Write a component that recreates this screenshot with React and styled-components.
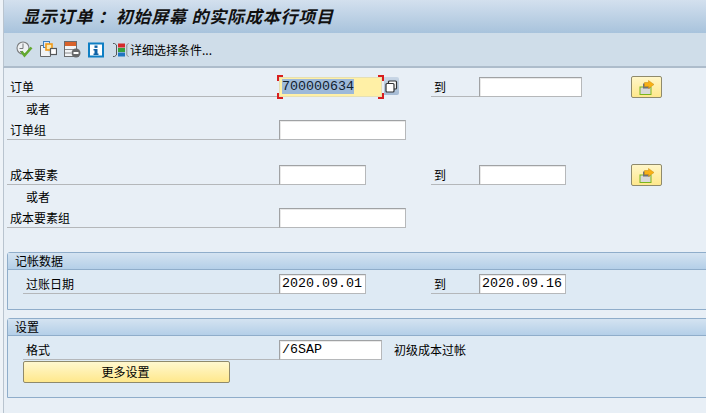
import React from "react";
import styled, { createGlobalStyle } from "styled-components";

const GlobalStyle = createGlobalStyle`
  html, body {
    margin: 0;
    padding: 0;
    background: #e8eff6;
  }
  body {
    font-family: "Noto Sans CJK SC", "Liberation Sans", sans-serif;
    font-size: 12px;
    color: #000;
  }
`;

const ClockCheckIcon = () => (
  <svg width="17" height="17" viewBox="0 0 17 17">
    <circle cx="7" cy="7" r="6" fill="#eef1f3" stroke="#7d7f81" strokeWidth="1.1" />
    <path d="M7 2.5V7.5H3.5M4 10.5H7" fill="none" stroke="#77797b" />
    <path d="M5.5 10.5L8.5 14.5L15.5 6.5" fill="none" stroke="#62a92f" strokeWidth="2.6" />
  </svg>
);

const CopyLayersIcon = () => (
  <svg width="17" height="17" viewBox="0 0 17 17">
    <path d="M3.5 4.5H0.5V15.5H10.5V13.5" fill="#f2f4f6" stroke="#66686a" />
    <rect x="3.5" y="0.5" width="6" height="6" fill="#dfe8f2" stroke="#3f7fbf" />
    <rect x="6" y="3" width="6" height="6" fill="#ffeab0" stroke="#f09a1a" strokeWidth="1.6" />
    <rect x="10.5" y="7.5" width="6" height="6" fill="#fff" stroke="#55585a" strokeWidth="1.2" />
  </svg>
);

const RemoveRowIcon = () => (
  <svg width="17" height="17" viewBox="0 0 17 17">
    <rect x="0.5" y="0.5" width="12" height="15" fill="#f3f5f7" stroke="#6a6c6e" />
    <rect x="1" y="1" width="11" height="4" fill="#d9622b" />
    <path d="M1 8.5H12M1 12H7" stroke="#8c8e90" />
    <circle cx="12" cy="12" r="4.5" fill="#66686a" />
    <rect x="9.5" y="11" width="5" height="2" fill="#fff" />
  </svg>
);

const InfoIcon = () => (
  <svg width="16" height="16" viewBox="0 0 16 16">
    <rect x="1" y="1.5" width="14" height="13" fill="#fff" stroke="#0f7fc4" strokeWidth="2" />
    <rect x="6.5" y="3.5" width="3" height="2.4" fill="#0f62a5" />
    <path d="M5.5 7H9.5V11.5H10.5V13H5.5V11.5H6.5V8.5H5.5Z" fill="#0f62a5" />
  </svg>
);

const MultiSelectIcon = () => (
  <svg width="16" height="16" viewBox="0 0 16 16">
    <path d="M0 1.5H1.5L3.5 3V13L1.5 14.5H0" fill="none" stroke="#55585a" />
    <path d="M15.5 1.5H15L13.8 3V13L15 14.5H15.5" fill="none" stroke="#8a8c8e" />
    <rect x="5" y="1.5" width="7" height="4" fill="#d42a2a" />
    <rect x="5" y="6" width="7" height="4" fill="#35a03c" />
    <rect x="5" y="10.5" width="7" height="4" fill="#1f74c0" />
  </svg>
);

const ValueHelpIcon = () => (
  <svg width="13" height="13" viewBox="0 0 13 13">
    <rect x="3.5" y="1" width="8" height="8" rx="1" fill="#fff" stroke="#303234" strokeWidth="1.2" />
    <rect x="1" y="3.5" width="8" height="8.5" rx="1" fill="#fff" stroke="#303234" strokeWidth="1.2" />
  </svg>
);

const MultipleArrowIcon = () => (
  <svg width="16" height="15" viewBox="0 0 16 15">
    <rect x="1" y="7" width="11" height="7.5" fill="#d9d9d9" stroke="#7ab51d" />
    <rect x="4" y="3.5" width="7" height="5" fill="#6f7278" />
    <path d="M5.5 2.5H9.5V0.5L15 4.5L9.5 8.5V6.5H5.5Z" fill="#f9b015" stroke="#c98a10" strokeWidth="0.5" />
  </svg>
);

const Page = styled.div`
  box-sizing: border-box;
  width: 706px;
  height: 413px;
  border-left: 3px solid #eef3f8;
  box-shadow: inset 1px 0 0 #b9c4cf;
  overflow: hidden;
`;

const TitleBar = styled.div`
  box-sizing: border-box;
  height: 33px;
  padding: 5px 0 0 18px;
  background: linear-gradient(#d3e0ee, #a8c3dc);
  border-left: 1px solid #b9c4cf;
`;

const Title = styled.h1`
  margin: 0;
  font-size: 17px;
  line-height: 22px;
  font-weight: 700;
  font-style: italic;
  letter-spacing: 0.8px;
  white-space: pre;
  color: #111;
`;

const Toolbar = styled.div`
  box-sizing: border-box;
  height: 35px;
  display: flex;
  align-items: center;
  padding-left: 12px;
  background: #cfdde9;
  border-left: 1px solid #b9c4cf;
  border-bottom: 2px solid #adbccb;
`;

const ToolIcon = styled.span`
  display: flex;
  width: ${(props) => props.$width}px;
`;

const ToolLabel = styled.span`
  font-size: 12px;
  line-height: 16px;
  margin-left: 1px;
`;

const Form = styled.div`
  padding: 8px 0 0 4px;
`;

const Row = styled.div`
  display: grid;
  grid-template-columns: ${(props) => props.$label || 272}px 152px 48px 152px auto;
  align-items: end;
  height: 20px;
  margin-top: ${(props) => props.$top || 0}px;
`;

const Label = styled.div`
  box-sizing: border-box;
  height: 20px;
  line-height: 20px;
  padding-left: 3px;
  border-bottom: 1px solid #b4b7ba;
  white-space: nowrap;
`;

const OrNote = styled.div`
  height: 24px;
  line-height: 26px;
  padding-left: 19px;
`;

const FieldCell = styled.div`
  display: flex;
  align-items: center;
  height: 20px;
`;

const Field = styled.div`
  position: relative;
  box-sizing: border-box;
  width: ${(props) => props.$width}px;
  height: 20px;
  padding: 0 2px;
  background: ${(props) => (props.$focused ? "#fff0a6" : "#fff")};
  border: 1px solid #a7a9ab;
  border-color: ${(props) => (props.$focused ? "#e6e0b4" : "#a0a2a4 #b6b8ba #b6b8ba #a0a2a4")};
  box-shadow: ${(props) => (props.$focused ? "none" : "inset 1px 1px 0 #e9e9e9")};
  font-family: "Liberation Mono", "DejaVu Sans Mono", monospace;
  font-size: 13.33px;
  line-height: 18px;
  white-space: nowrap;
`;

const Selected = styled.span`
  background: #9db9d9;
  color: #10202e;
`;

const FocusCorner = styled.i`
  position: absolute;
  width: 4px;
  height: 4px;
  ${(props) => (props.$y === "top" ? "top: -3px;" : "bottom: -3px;")}
  ${(props) => (props.$x === "left" ? "left: -3px;" : "right: -3px;")}
  border: 0 solid #d81e1e;
  ${(props) => (props.$y === "top" ? "border-top-width: 2px;" : "border-bottom-width: 2px;")}
  ${(props) => (props.$x === "left" ? "border-left-width: 2px;" : "border-right-width: 2px;")}
`;

const ValueHelp = styled.div`
  display: flex;
  align-items: center;
  justify-content: center;
  width: 15px;
  height: 18px;
  margin: 0 0 2px 2px;
  background: linear-gradient(#c9d7e6, #a5bbd4);
  border-radius: 0 2px 2px 0;
`;

const MultiButton = styled.div`
  box-sizing: border-box;
  display: flex;
  align-items: center;
  justify-content: center;
  width: 31px;
  height: 22px;
  margin-bottom: -1px;
  background: linear-gradient(#fff6c8, #ffe88c);
  border: 1px solid #8f8a6c;
  border-radius: 2px;
`;

const Group = styled.div`
  margin: ${(props) => props.$top}px -2px 0 0;
  height: ${(props) => props.$height}px;
  box-sizing: border-box;
  background: #deeaf4;
  border: 1px solid #8fadca;
  border-radius: 3px 0 0 0;
`;

const GroupHeader = styled.div`
  box-sizing: border-box;
  height: 17px;
  padding-left: 7px;
  line-height: 15px;
  background: linear-gradient(#d4e3f1, #b4cfe8);
  border-bottom: 1px solid #8fadca;
`;

const GroupBody = styled.div`
  padding: 4px 0 0 15px;
`;

const Description = styled.div`
  grid-column: 3 / 5;
  margin-left: -37px;
  line-height: 20px;
  white-space: nowrap;
`;

const YellowButton = styled.div`
  box-sizing: border-box;
  width: 207px;
  height: 22px;
  margin-top: 1px;
  padding-right: 2px;
  text-align: center;
  line-height: 20px;
  background: linear-gradient(#fff8cf, #ffe88c);
  border: 1px solid #8f8a6c;
  border-radius: 2px;
`;

const multiIcon = (
  <MultiButton>
    <MultipleArrowIcon />
  </MultiButton>
);

const App = () => (
  <>
    <GlobalStyle />
    <Page>
      <TitleBar>
        <Title>显示订单 ：初始屏幕 的实际成本行项目</Title>
      </TitleBar>
      <Toolbar>
        <ToolIcon $width={24}><ClockCheckIcon /></ToolIcon>
        <ToolIcon $width={24}><CopyLayersIcon /></ToolIcon>
        <ToolIcon $width={24}><RemoveRowIcon /></ToolIcon>
        <ToolIcon $width={25}><InfoIcon /></ToolIcon>
        <ToolIcon $width={16}><MultiSelectIcon /></ToolIcon>
        <ToolLabel>详细选择条件...</ToolLabel>
      </Toolbar>

      <Form>
        <Row>
          <Label>订单</Label>
          <FieldCell>
            <Field $width={103} $focused>
              <Selected>700000634</Selected>
              <FocusCorner $x="left" $y="top" />
              <FocusCorner $x="right" $y="top" />
              <FocusCorner $x="left" $y="bottom" />
              <FocusCorner $x="right" $y="bottom" />
            </Field>
            <ValueHelp><ValueHelpIcon /></ValueHelp>
          </FieldCell>
          <Label>到</Label>
          <FieldCell><Field $width={103} /></FieldCell>
          {multiIcon}
        </Row>
        <OrNote>或者</OrNote>
        <Row>
          <Label>订单组</Label>
          <FieldCell><Field $width={127} /></FieldCell>
        </Row>

        <Row $top={24}>
          <Label>成本要素</Label>
          <FieldCell><Field $width={87} /></FieldCell>
          <Label>到</Label>
          <FieldCell><Field $width={87} /></FieldCell>
          {multiIcon}
        </Row>
        <OrNote>或者</OrNote>
        <Row>
          <Label>成本要素组</Label>
          <FieldCell><Field $width={127} /></FieldCell>
        </Row>

        <Group $top={24} $height={58}>
          <GroupHeader>记帐数据</GroupHeader>
          <GroupBody>
            <Row $label={256}>
              <Label>过账日期</Label>
              <FieldCell><Field $width={87}>2020.09.01</Field></FieldCell>
              <Label>到</Label>
              <FieldCell><Field $width={87}>2020.09.16</Field></FieldCell>
            </Row>
          </GroupBody>
        </Group>

        <Group $top={8} $height={80}>
          <GroupHeader>设置</GroupHeader>
          <GroupBody>
            <Row $label={256}>
              <Label>格式</Label>
              <FieldCell><Field $width={103}>/6SAP</Field></FieldCell>
              <Description>初级成本过帐</Description>
            </Row>
            <YellowButton>更多设置</YellowButton>
          </GroupBody>
        </Group>
      </Form>
    </Page>
  </>
);

export default App;
